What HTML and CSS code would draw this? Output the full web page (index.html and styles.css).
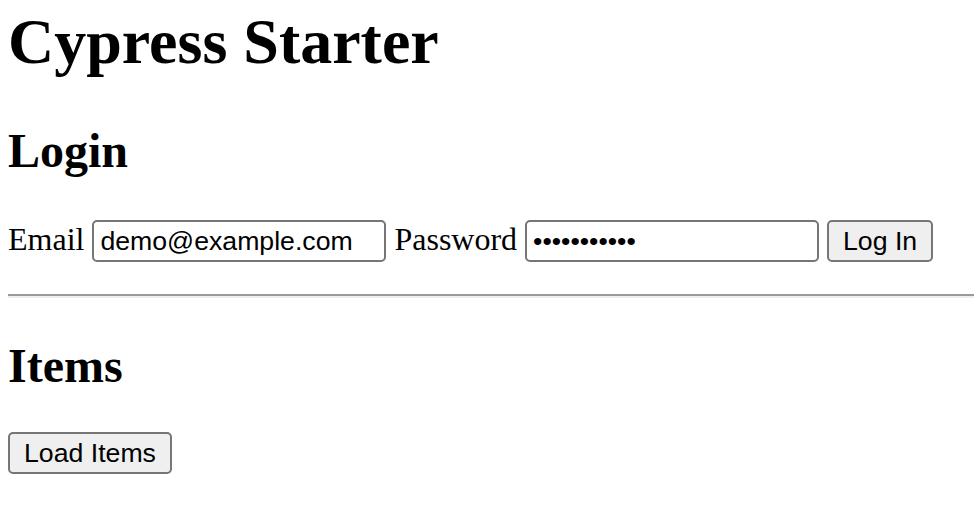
FILE: index.html
```html
<!DOCTYPE html>
<html lang="en">
<head>
<meta charset="utf-8">
<title>Cypress Starter</title>
<link rel="stylesheet" href="styles.css">
</head>
<body>
<h1 class="title">Cypress Starter</h1>
<section class="login">
  <h2 class="heading">Login</h2>
  <form class="login-form">
    <label class="field-label" for="email">Email</label>
    <input class="field" id="email" type="email" value="demo@example.com">
    <label class="field-label" for="password">Password</label>
    <input class="field" id="password" type="password" value="password123">
    <button class="btn btn-login" type="button">Log In</button>
  </form>
</section>
<hr class="divider">
<section class="items">
  <h2 class="heading heading-items">Items</h2>
  <button class="btn btn-load" type="button">Load Items</button>
</section>
</body>
</html>
```
FILE: styles.css
```css
html, body {
  background: #fff;
}
body {
  margin: 0 0 0 8px;
  font-family: "Liberation Serif", "Times New Roman", serif;
  font-size: 32px;
  color: #000;
}
.title {
  font-size: 64px;
  font-weight: bold;
  margin: 5px 0 0 0;
  line-height: normal;
}
.heading {
  font-size: 48px;
  font-weight: bold;
  margin: 44px 0 0 0;
  line-height: normal;
}
.heading-items {
  margin-top: 40px;
}
.login-form {
  display: flex;
  align-items: baseline;
  gap: 8px;
  margin-top: 42px;
}
.field {
  box-sizing: border-box;
  width: 294px;
  height: 42px;
  margin: 0;
  padding: 0 6px;
  font-family: "Liberation Sans", Arial, sans-serif;
  font-size: 26.67px;
  color: #000;
  background: #fff;
  border: 2px solid #767676;
  border-radius: 5px;
}
.btn {
  box-sizing: border-box;
  height: 42px;
  margin: 0;
  padding: 0;
  white-space: nowrap;
  font-family: "Liberation Sans", Arial, sans-serif;
  font-size: 26.67px;
  color: #000;
  background: #efefef;
  border: 2px solid #767676;
  border-radius: 5px;
}
.btn-login {
  width: 106px;
}
.btn-load {
  width: 164px;
  margin-top: 39px;
  display: block;
}
.divider {
  margin: 32px 0 0 0;
  height: 0;
  border: 0;
  border-top: 2px solid #9a9a9a;
  border-bottom: 2px solid #eeeeee;
}
```
